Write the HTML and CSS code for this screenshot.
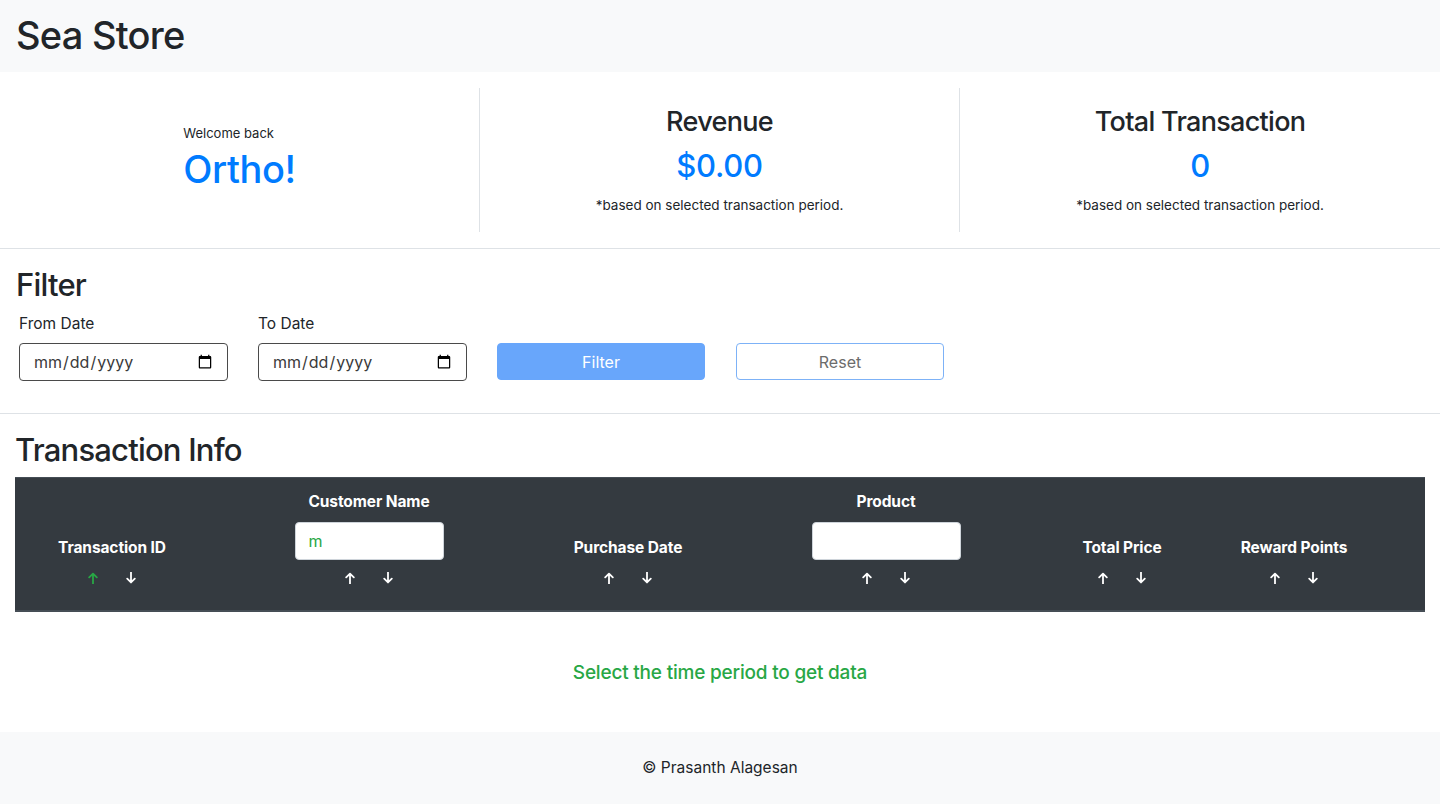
FILE: index.html
```html
<!DOCTYPE html>
<html lang="en">
<head>
<meta charset="utf-8">
<title>Sea Store</title>
<link rel="stylesheet" href="styles.css">
</head>
<body>
<header class="topbar">
  <h1 class="brand">Sea Store</h1>
</header>

<section class="stats">
  <div class="stat stat-divider">
    <div class="welcome">
      <div class="welcome-small">Welcome back</div>
      <div class="welcome-name">Ortho!</div>
    </div>
  </div>
  <div class="stat stat-divider">
    <div class="stat-inner">
      <h3 class="stat-title">Revenue</h3>
      <div class="stat-value">$0.00</div>
      <div class="stat-note">*based on selected transaction period.</div>
    </div>
  </div>
  <div class="stat">
    <div class="stat-inner">
      <h3 class="stat-title">Total Transaction</h3>
      <div class="stat-value">0</div>
      <div class="stat-note">*based on selected transaction period.</div>
    </div>
  </div>
</section>

<section class="filter">
  <h2 class="section-title">Filter</h2>
  <div class="filter-row">
    <div class="field">
      <label class="field-label" for="from">From Date</label>
      <input class="date-input" id="from" type="date">
    </div>
    <div class="field">
      <label class="field-label" for="to">To Date</label>
      <input class="date-input" id="to" type="date">
    </div>
    <div class="field field-btn">
      <button class="btn btn-filter" disabled>Filter</button>
    </div>
    <div class="field field-btn">
      <button class="btn btn-reset" disabled>Reset</button>
    </div>
  </div>
</section>

<section class="txn">
  <h2 class="section-title">Transaction Info</h2>
  <table class="txn-table">
    <colgroup>
      <col class="c1"><col class="c2"><col class="c3"><col class="c4"><col class="c5"><col class="c6"><col class="c7">
    </colgroup>
    <thead>
      <tr>
        <th>
          <div class="th-title">Transaction ID</div>
          <div class="sort">
            <span class="arrow active"><svg viewBox="0 0 10 12" width="10" height="12"><path d="M5 12V1.6M1.2 5.4L5 1.6L8.8 5.4"/></svg></span>
            <span class="arrow"><svg viewBox="0 0 10 12" width="10" height="12"><path d="M5 0V10.4M1.2 6.6L5 10.4L8.8 6.6"/></svg></span>
          </div>
        </th>
        <th>
          <div class="th-title">Customer Name</div>
          <input class="th-input" type="text" value="m">
          <div class="sort">
            <span class="arrow"><svg viewBox="0 0 10 12" width="10" height="12"><path d="M5 12V1.6M1.2 5.4L5 1.6L8.8 5.4"/></svg></span>
            <span class="arrow"><svg viewBox="0 0 10 12" width="10" height="12"><path d="M5 0V10.4M1.2 6.6L5 10.4L8.8 6.6"/></svg></span>
          </div>
        </th>
        <th>
          <div class="th-title">Purchase Date</div>
          <div class="sort">
            <span class="arrow"><svg viewBox="0 0 10 12" width="10" height="12"><path d="M5 12V1.6M1.2 5.4L5 1.6L8.8 5.4"/></svg></span>
            <span class="arrow"><svg viewBox="0 0 10 12" width="10" height="12"><path d="M5 0V10.4M1.2 6.6L5 10.4L8.8 6.6"/></svg></span>
          </div>
        </th>
        <th>
          <div class="th-title">Product</div>
          <input class="th-input" type="text" value="">
          <div class="sort">
            <span class="arrow"><svg viewBox="0 0 10 12" width="10" height="12"><path d="M5 12V1.6M1.2 5.4L5 1.6L8.8 5.4"/></svg></span>
            <span class="arrow"><svg viewBox="0 0 10 12" width="10" height="12"><path d="M5 0V10.4M1.2 6.6L5 10.4L8.8 6.6"/></svg></span>
          </div>
        </th>
        <th>
          <div class="th-title">Total Price</div>
          <div class="sort">
            <span class="arrow"><svg viewBox="0 0 10 12" width="10" height="12"><path d="M5 12V1.6M1.2 5.4L5 1.6L8.8 5.4"/></svg></span>
            <span class="arrow"><svg viewBox="0 0 10 12" width="10" height="12"><path d="M5 0V10.4M1.2 6.6L5 10.4L8.8 6.6"/></svg></span>
          </div>
        </th>
        <th>
          <div class="th-title">Reward Points</div>
          <div class="sort">
            <span class="arrow"><svg viewBox="0 0 10 12" width="10" height="12"><path d="M5 12V1.6M1.2 5.4L5 1.6L8.8 5.4"/></svg></span>
            <span class="arrow"><svg viewBox="0 0 10 12" width="10" height="12"><path d="M5 0V10.4M1.2 6.6L5 10.4L8.8 6.6"/></svg></span>
          </div>
        </th>
        <th></th>
      </tr>
    </thead>
  </table>
  <p class="empty-msg">Select the time period to get data</p>
</section>

<footer class="footer">© Prasanth Alagesan</footer>
</body>
</html>
```

FILE: styles.css
```css
* { box-sizing: border-box; }
html, body { margin: 0; padding: 0; }
body {
  font-family: Inter, "Noto Sans", "Liberation Sans", sans-serif;
  font-size: 16px;
  line-height: 1.5;
  color: #212529;
  background: #fff;
}

.topbar {
  background: #f8f9fa;
  height: 72px;
  padding: 11px 16px 13px;
}
.brand {
  margin: 0;
  font-size: 38px;
  font-weight: 500;
  line-height: 48px;
  letter-spacing: -0.75px;
}

.stats {
  display: grid;
  grid-template-columns: repeat(3, 1fr);
  padding: 16px 0;
  border-bottom: 1px solid #dee2e6;
}
.stat {
  height: 144px;
  display: flex;
  align-items: center;
  justify-content: center;
  text-align: center;
}
.stat-divider { border-right: 1px solid #dee2e6; }
.welcome { text-align: left; padding-bottom: 6px; }
.welcome-small { font-size: 13px; line-height: 21px; margin-bottom: 2px; }
.welcome-name {
  font-size: 38px;
  line-height: 46px;
  font-weight: 500;
  color: #007bff;
  letter-spacing: -0.4px;
}
.stat-title {
  margin: 0 0 8px;
  font-size: 27px;
  line-height: 34px;
  font-weight: 500;
  letter-spacing: -0.7px;
}
.stat-value {
  font-size: 31px;
  line-height: 38px;
  font-weight: 500;
  color: #007bff;
  margin-bottom: 10px;
  letter-spacing: -0.3px;
}
.stat-note { font-size: 13.5px; line-height: 21px; }

.filter {
  padding: 16px 16px 32px;
  border-bottom: 1px solid #dee2e6;
}
.section-title {
  margin: 0 0 8px;
  font-size: 31px;
  line-height: 38px;
  font-weight: 500;
  letter-spacing: -0.8px;
}
.filter .section-title { margin-top: 1px; }
.filter-row {
  display: flex;
  gap: 30px;
  padding-left: 3px;
}
.field {
  width: 209px;
  display: flex;
  flex-direction: column;
}
.field-btn { justify-content: flex-end; }
.field-label {
  font-size: 15.5px;
  line-height: 24px;
  margin: 0 0 7px;
}
.date-input {
  height: 38px;
  width: 209px;
  border: 1px solid #4a4a4a;
  border-radius: 4px;
  padding: 0 12px 0 13px;
  font-family: inherit;
  font-size: 16px;
  color: #3a3a3a;
  background: #fff;
}
.btn {
  height: 37px;
  width: 208px;
  border-radius: 4px;
  font-family: inherit;
  font-size: 16px;
  line-height: 24px;
  margin-bottom: 1px;
}
.btn-filter {
  background: #68a6fb;
  border: 1px solid #68a6fb;
  color: #fff;
}
.btn-reset {
  background: #fff;
  border: 1px solid #7db2f7;
  color: #6c6c6c;
}

.txn { padding: 17px 15px 0; }
.txn-table {
  width: 1410px;
  border-collapse: collapse;
  table-layout: fixed;
}
.c1 { width: 194px; }
.c2 { width: 320px; }
.c3 { width: 198px; }
.c4 { width: 318px; }
.c5 { width: 154px; }
.c6 { width: 190px; }
.c7 { width: 36px; }
.txn-table th {
  background: #343a40;
  color: #fff;
  border-top: 1px solid #454d55;
  border-bottom: 2px solid #454d55;
  padding: 12px 0 20px;
  vertical-align: bottom;
  text-align: center;
  font-weight: 700;
}
.th-title {
  font-size: 15.5px;
  line-height: 24px;
  letter-spacing: -0.1px;
}
.th-input {
  display: block;
  margin: 8px auto 0;
  width: 149px;
  height: 38px;
  border: 1px solid #ced4da;
  border-radius: 4px;
  padding: 0 13px;
  font-family: inherit;
  font-size: 16px;
  color: #28a745;
  background: #fff;
}
.sort {
  display: flex;
  justify-content: center;
  gap: 14px;
  margin-top: 6px;
  height: 24px;
  align-items: center;
}
.arrow {
  width: 24px;
  height: 24px;
  display: flex;
  align-items: center;
  justify-content: center;
  color: #fff;
}
.arrow svg {
  fill: none;
  stroke: currentColor;
  stroke-width: 1.8;
  stroke-linecap: round;
  stroke-linejoin: round;
}
.arrow.active { color: #28a745; }

.empty-msg {
  margin: 46px 0 0;
  padding-bottom: 44px;
  text-align: center;
  color: #28a745;
  font-size: 19px;
  line-height: 30px;
  font-weight: 500;
  letter-spacing: -0.2px;
}

.footer {
  background: #f8f9fa;
  height: 72px;
  padding: 24px 0;
  text-align: center;
  font-size: 15.5px;
  line-height: 24px;
}
```
